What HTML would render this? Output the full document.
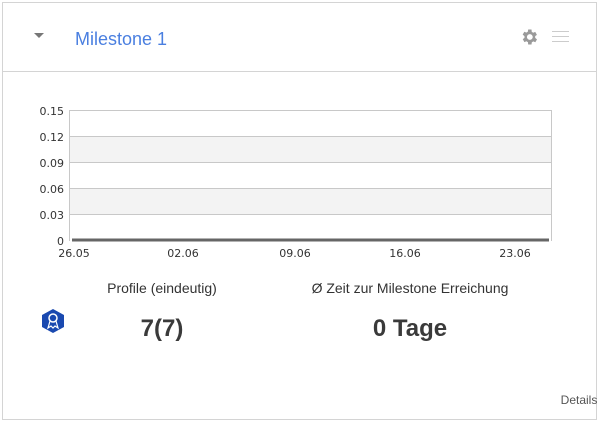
<!DOCTYPE html>
<html><head><meta charset="utf-8"><style>
html,body{margin:0;padding:0;background:#fff;width:601px;height:421px;overflow:hidden;font-family:"Liberation Sans",Arial,sans-serif}
.card{position:absolute;left:2px;top:2px;width:595px;height:418px;border:1px solid #d4d4d4;box-sizing:border-box}
.hdr{position:absolute;left:0;top:0;width:593px;height:68px;border-bottom:1px solid #d4d4d4}
.t{position:absolute;left:72px;top:26px;font-size:18px;color:#4a7fe0}
.abs{position:absolute}
</style></head><body>
<div class="card">
 <div class="hdr">
  <div class="abs" style="left:31px;top:30px;width:0;height:0;border-left:5px solid transparent;border-right:5px solid transparent;border-top:5px solid #777"></div>
  <div class="t">Milestone 1</div>
  <svg class="abs" style="left:516px;top:24px" width="20" height="20" viewBox="0 0 24 24"><path fill="#9a9a9a" d="M19.4 13a7.5 7.5 0 000-2l2.1-1.6-2-3.5-2.5 1a7.4 7.4 0 00-1.7-1L15 3h-4l-.4 2.7a7.4 7.4 0 00-1.7 1l-2.5-1-2 3.5L6.6 11a7.5 7.5 0 000 2l-2.1 1.6 2 3.5 2.5-1a7.4 7.4 0 001.7 1L11 21h4l.4-2.7a7.4 7.4 0 001.7-1l2.5 1 2-3.5zM13 15.5a3.5 3.5 0 110-7 3.5 3.5 0 010 7z"/></svg>
  <div class="abs" style="left:549px;top:28px;width:17px;height:1px;background:#ccc;box-shadow:0 5px 0 #ccc,0 10px 0 #ccc"></div>
 </div>
</div>
<svg class="abs" style="left:0;top:0" width="601" height="421">
 <rect x="69" y="136" width="482" height="26" fill="#f3f3f3"/>
 <rect x="69" y="188" width="482" height="26" fill="#f3f3f3"/>
 <g stroke="#c8c8c8" stroke-width="1">
  <line x1="69" y1="110.5" x2="551" y2="110.5"/>
  <line x1="69" y1="136.5" x2="551" y2="136.5"/>
  <line x1="69" y1="162.5" x2="551" y2="162.5"/>
  <line x1="69" y1="188.5" x2="551" y2="188.5"/>
  <line x1="69" y1="214.5" x2="551" y2="214.5"/>
  <line x1="69.5" y1="110" x2="69.5" y2="241"/>
  <line x1="551.5" y1="110" x2="551.5" y2="241"/>
 </g>
 <line x1="72" y1="240" x2="549" y2="240" stroke="#666" stroke-width="3"/>
 <g font-size="11" fill="#333" font-family="DejaVu Sans,sans-serif" text-anchor="end">
  <text x="64" y="115">0.15</text><text x="64" y="141">0.12</text><text x="64" y="167">0.09</text>
  <text x="64" y="193">0.06</text><text x="64" y="219">0.03</text><text x="64" y="245">0</text>
 </g>
 <g font-size="11" fill="#333" font-family="DejaVu Sans,sans-serif" text-anchor="middle">
  <text x="74" y="257">26.05</text><text x="183" y="257">02.06</text><text x="295" y="257">09.06</text>
  <text x="405" y="257">16.06</text><text x="515" y="257">23.06</text>
 </g>
 <g font-family="Liberation Sans,sans-serif" fill="#333" text-anchor="middle">
  <text x="162" y="293" font-size="14">Profile (eindeutig)</text>
  <text x="410" y="293" font-size="14">Ø Zeit zur Milestone Erreichung</text>
  <text x="162" y="336" font-size="24" font-weight="bold" fill="#3a3a3a">7(7)</text>
  <text x="410" y="336" font-size="24" font-weight="bold" fill="#3a3a3a">0 Tage</text>
  <text x="579" y="404" font-size="12" fill="#555">Details</text>
 </g>
 <polygon points="53,309 64,315 64,327 53,333 42,327 42,315" fill="#1a49b0"/>
 <circle cx="53" cy="318" r="4" fill="none" stroke="#fff" stroke-width="1.5"/>
 <path d="M50 321 L48 328 L51 326 L53 328 L55 326 L58 328 L56 321" fill="none" stroke="#fff" stroke-width="1.2"/>
</svg>
</body></html>
